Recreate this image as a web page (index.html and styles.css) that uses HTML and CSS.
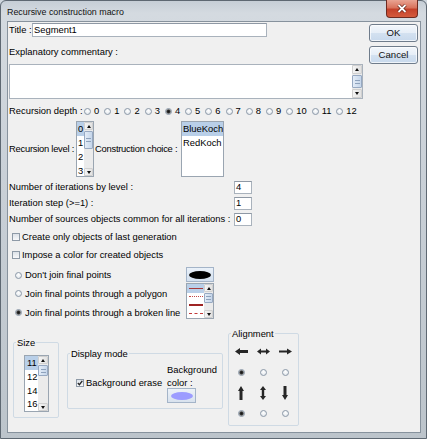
FILE: index.html
```html
<!DOCTYPE html>
<html lang="en">
<head>
<meta charset="utf-8">
<title>Recursive construction macro</title>
<link rel="stylesheet" href="styles.css">
</head>
<body>
<div class="window">
  <div class="titlebar">
    <span class="wtitle">Recursive construction macro</span>
    <div class="close"><svg width="12" height="9" viewBox="0 0 12 9"><path d="M2.5 1 L9.5 8 M9.5 1 L2.5 8" stroke="#5a1a10" stroke-width="3.2"/><path d="M2.5 1 L9.5 8 M9.5 1 L2.5 8" stroke="#fff" stroke-width="1.8"/></svg></div>
  </div>
  <div class="client">
    <div class="main">
      <div class="row title-row"><span class="lbl-title">Title :</span><div class="tinput title-input">Segment1</div></div>
      <div class="row expl">Explanatory commentary :</div>
      <div class="textarea">
        <div class="vscroll">
          <div class="sb-btn up b9"></div>
          <div class="sb-thumb t14"><span></span></div>
          <div class="sb-track"></div>
          <div class="sb-btn down b9"></div>
        </div>
      </div>
      <div class="row depth">
        <span class="depth-label">Recursion depth :</span>
        <span class="ropt"><i class="radio"></i>0</span>
        <span class="ropt"><i class="radio"></i>1</span>
        <span class="ropt"><i class="radio"></i>2</span>
        <span class="ropt"><i class="radio"></i>3</span>
        <span class="ropt"><i class="radio on"></i>4</span>
        <span class="ropt"><i class="radio"></i>5</span>
        <span class="ropt"><i class="radio"></i>6</span>
        <span class="ropt"><i class="radio"></i>7</span>
        <span class="ropt"><i class="radio"></i>8</span>
        <span class="ropt"><i class="radio"></i>9</span>
        <span class="ropt"><i class="radio"></i>10</span>
        <span class="ropt"><i class="radio"></i>11</span>
        <span class="ropt"><i class="radio"></i>12</span>
      </div>
      <div class="row levels">
        <span class="lv-label">Recursion level :</span>
        <div class="list lv-list">
          <div class="items">
            <div class="item r14 sel">0</div>
            <div class="item r14">1</div>
            <div class="item r14">2</div>
            <div class="item r14">3</div>
          </div>
          <div class="vscroll">
            <div class="sb-btn up b8"></div>
            <div class="sb-thumb t18"><span></span></div>
            <div class="sb-track"></div>
            <div class="sb-btn down b8"></div>
          </div>
        </div>
        <span class="cc-label">Construction choice :</span>
        <div class="list cc-list">
          <div class="items">
            <div class="item r14 sel">BlueKoch</div>
            <div class="item r14">RedKoch</div>
          </div>
        </div>
      </div>
      <div class="row field first"><span class="f-label">Number of iterations by level :</span><div class="tinput num">4</div></div>
      <div class="row field"><span class="f-label">Iteration step (&gt;=1) :</span><div class="tinput num">1</div></div>
      <div class="row field"><span class="f-label">Number of sources objects common for all iterations :</span><div class="tinput num">0</div></div>
      <div class="row crow first"><i class="check"></i>Create only objects of last generation</div>
      <div class="row crow"><i class="check"></i>Impose a color for created objects</div>
      <div class="join">
        <div class="join-opts">
          <div class="jrow j18"><i class="radio"></i>Don't join final points</div>
          <div class="jrow j19"><i class="radio"></i>Join final points through a polygon</div>
          <div class="jrow j19"><i class="radio on"></i>Join final points through a broken line</div>
        </div>
        <div class="join-boxes">
          <div class="pointbox"><span class="blob"></span></div>
          <div class="list linelist">
            <div class="items">
              <div class="lrow sel"><span class="ln solid"></span></div>
              <div class="lrow"><span class="ln dotted"></span></div>
              <div class="lrow"><span class="ln thick"></span></div>
              <div class="lrow"><span class="ln dashed"></span></div>
            </div>
            <div class="vscroll">
              <div class="sb-btn up b8"></div>
              <div class="sb-thumb t10"><span></span></div>
              <div class="sb-track"></div>
              <div class="sb-btn down b8"></div>
            </div>
          </div>
        </div>
      </div>
      <div class="bottom">
        <fieldset class="fs-size">
          <legend>Size</legend>
          <div class="list sizelist">
            <div class="items">
              <div class="item r13 sel">11</div>
              <div class="item r13">12</div>
              <div class="item r13">14</div>
              <div class="item r13">16</div>
            </div>
            <div class="vscroll">
              <div class="sb-btn up b8"></div>
              <div class="sb-thumb t11"><span></span></div>
              <div class="sb-track"></div>
              <div class="sb-btn down b8"></div>
            </div>
          </div>
        </fieldset>
        <fieldset class="fs-display">
          <legend>Display mode</legend>
          <div class="disp">
            <div class="erase"><i class="check on"><svg width="6" height="6" viewBox="0 0 6 6"><path d="M0.8 3 L2.4 4.7 L5.3 0.8" fill="none" stroke="#222" stroke-width="1.3"/></svg></i>Background erase</div>
            <div class="bgcol">
              <div class="bgline">Background</div>
              <div class="bgline">color :</div>
              <div class="colorbox"><span class="lav"></span></div>
            </div>
          </div>
        </fieldset>
        <fieldset class="fs-align">
          <legend>Alignment</legend>
          <div class="agrid">
            <span class="cell"><svg width="13" height="7" viewBox="0 0 13 7"><path d="M0 3.5 L5 0 V2 H13 V5 H5 V7 Z" fill="#262626"/></svg></span>
            <span class="cell"><svg width="13" height="7" viewBox="0 0 13 7"><path d="M0 3.5 L4 0.5 V2.5 H9 V0.5 L13 3.5 L9 6.5 V4.5 H4 V6.5 Z" fill="#262626"/></svg></span>
            <span class="cell"><svg width="13" height="7" viewBox="0 0 13 7"><path d="M0 2.6 H8 V0.5 L13 3.5 L8 6.5 V4.4 H0 Z" fill="#262626"/></svg></span>
            <span class="cell"><i class="radio on"></i></span>
            <span class="cell"><i class="radio"></i></span>
            <span class="cell"><i class="radio"></i></span>
            <span class="cell"><svg width="6" height="14" viewBox="0 0 6 14"><path d="M3 0 L6 5 H4.5 V14 H1.5 V5 H0 Z" fill="#262626"/></svg></span>
            <span class="cell"><svg width="6" height="14" viewBox="0 0 6 14"><path d="M3 0 L6 4 H4.2 V10 H6 L3 14 L0 10 H1.8 V4 H0 Z" fill="#262626"/></svg></span>
            <span class="cell"><svg width="6" height="14" viewBox="0 0 6 14"><path d="M1.5 0 H4.5 V9 H6 L3 14 L0 9 H1.5 Z" fill="#262626"/></svg></span>
            <span class="cell"><i class="radio on"></i></span>
            <span class="cell"><i class="radio"></i></span>
            <span class="cell"><i class="radio"></i></span>
          </div>
        </fieldset>
      </div>
    </div>
    <div class="buttons">
      <div class="btn">OK</div>
      <div class="btn">Cancel</div>
    </div>
  </div>
</div>
</body>
</html>
```
FILE: styles.css
```css
* { box-sizing: border-box; margin: 0; padding: 0; }
html, body { width: 427px; height: 439px; overflow: hidden; }
body {
  font-family: "Liberation Sans", Arial, sans-serif;
  font-size: 9.4px;
  line-height: 1;
  color: #000;
  background: #cfd6dd;
}
i { font-style: normal; }

.window {
  width: 427px;
  height: 439px;
  border: 1px solid #5e6872;
  border-radius: 6px 6px 0 0;
  background: linear-gradient(180deg, #c6ced6 0, #d4dae0 12px, #c9d0d7 40%, #bcc4cb 100%);
  padding: 0 5px 5px 6px;
  display: flex;
  flex-direction: column;
}
.titlebar {
  height: 20px;
  display: flex;
  align-items: flex-start;
}
.wtitle {
  font-size: 8.9px;
  margin-top: 7px;
  color: #111;
}
.close {
  margin-left: auto;
  margin-right: 3px;
  margin-top: -1px;
  width: 32px;
  height: 18px;
  border: 1px solid #6e2a20;
  border-top: none;
  border-radius: 0 0 4px 4px;
  background: linear-gradient(180deg, #e9a493 0, #d9735d 45%, #c4412a 55%, #d45a3c 100%);
  display: flex;
  align-items: center;
  justify-content: center;
}

.client {
  width: 414px;
  height: 412px;
  border: 1px solid #87929d;
  background: #f0f0f0;
  display: flex;
}
.main {
  width: 357px;
  padding-left: 1px;
  display: flex;
  flex-direction: column;
}
.buttons {
  margin-left: auto;
  margin-right: 2px;
  padding-top: 2px;
  width: 49px;
  display: flex;
  flex-direction: column;
  gap: 4px;
}
.btn {
  height: 18px;
  border: 1px solid #6f7c8b;
  border-radius: 3px;
  background: linear-gradient(180deg, #f3f7fb 0, #e6eef7 48%, #d3e1f0 52%, #c8d9ec 100%);
  box-shadow: inset 0 0 0 1px rgba(255,255,255,0.7);
  display: flex;
  align-items: center;
  justify-content: center;
  font-size: 9.6px;
  color: #111;
}

.row { display: flex; align-items: center; white-space: nowrap; }
.title-row { height: 16px; }
.lbl-title { width: 23px; }
.tinput {
  background: #fff;
  border: 1px solid #a9b2bc;
  border-top-color: #8e98a4;
  display: flex;
  align-items: center;
  padding-left: 1px;
}
.title-input { width: 235px; height: 14px; }
.expl { margin-top: 7px; height: 14px; }

.textarea {
  margin-top: 5px;
  width: 354px;
  height: 35px;
  background: #fff;
  border: 1px solid #a9b2bc;
  display: flex;
  justify-content: flex-end;
}

/* scrollbars */
.vscroll {
  width: 10px;
  display: flex;
  flex-direction: column;
  background: #ebebeb;
  flex: none;
}
.sb-btn {
  display: flex;
  align-items: center;
  justify-content: center;
  background: linear-gradient(90deg, #f4f4f4, #e2e2e2);
  border: 1px solid #d0d0d0;
  border-radius: 1px;
}
.b8 { height: 8px; }
.b9 { height: 9px; }
.sb-btn.up::after, .sb-btn.down::after {
  content: "";
  width: 0;
  height: 0;
  border-left: 2.5px solid transparent;
  border-right: 2.5px solid transparent;
}
.sb-btn.up::after { border-bottom: 3px solid #111; }
.sb-btn.down::after { border-top: 3px solid #111; }
.sb-thumb {
  margin: 1px 0;
  border: 1px solid #97a9c2;
  border-radius: 1px;
  background: linear-gradient(90deg, #e3ecf7, #c6d6ea);
  display: flex;
  align-items: center;
  justify-content: center;
}
.sb-thumb span {
  width: 5px;
  height: 4px;
  border-top: 1px solid #8ea2bc;
  border-bottom: 1px solid #8ea2bc;
}
.t10 { height: 10px; }
.t11 { height: 11px; }
.t14 { height: 14px; }
.t18 { height: 18px; }
.sb-track { flex: 1; }

/* recursion depth */
.depth { margin-top: 5px; height: 14px; }
.depth-label { width: 75px; }
.ropt { display: flex; align-items: center; gap: 3px; margin-right: 5px; }
.radio {
  display: block;
  width: 7px;
  height: 7px;
  border-radius: 50%;
  border: 1px solid #8b99a8;
  background: radial-gradient(circle at 50% 35%, #ffffff 0, #eef1f4 50%, #d9dee4 100%);
  flex: none;
}
.radio.on {
  background: radial-gradient(circle, #151515 0, #2a2a2a 1.3px, #8c8c8c 2.2px, #f0f0f0 2.8px);
}

/* lists */
.list {
  background: #fff;
  border: 1px solid #9aa5b1;
  display: flex;
  overflow: hidden;
}
.items { flex: 1; overflow: hidden; }
.item { padding-left: 1px; display: flex; align-items: center; white-space: nowrap; }
.r14 { height: 14px; }
.r13 { height: 13.75px; }
.sel { background: #b9cfe8; }

.levels { margin-top: 3px; height: 56px; }
.lv-label { width: 67px; letter-spacing: -0.25px; }
.lv-list { width: 18px; height: 56px; }
.lv-list .vscroll { width: 9px; }
.cc-label { margin-left: 1px; width: 86px; letter-spacing: -0.25px; }
.cc-list { width: 43px; height: 56px; }

/* numeric fields */
.field { height: 16px; }
.field.first { margin-top: 2px; }
.f-label { width: 225px; }
.num { width: 18px; height: 13px; }

/* checkboxes */
.crow { height: 18px; padding-left: 3px; }
.crow.first { margin-top: 1px; }
.check {
  display: flex;
  align-items: center;
  justify-content: center;
  width: 8px;
  height: 8px;
  border: 1px solid #8e9aa7;
  background: linear-gradient(180deg, #dde2e8, #f7f8fa);
  margin-right: 2px;
  flex: none;
}

/* join options */
.join { margin-top: 2px; height: 56px; display: flex; }
.join-opts { width: 177px; display: flex; flex-direction: column; }
.jrow { display: flex; align-items: center; gap: 3px; padding-left: 6px; white-space: nowrap; }
.j18 { height: 18px; }
.j19 { height: 19px; }
.join-boxes { padding-top: 1px; display: flex; flex-direction: column; gap: 1px; }
.pointbox {
  width: 28px;
  height: 15px;
  border: 1px solid #a4b4c8;
  background: linear-gradient(180deg, #eaf1f9, #d3e0ef);
  display: flex;
  align-items: center;
  justify-content: center;
}
.blob { width: 22px; height: 8px; border-radius: 50%; background: #000; }
.linelist { width: 28px; height: 36px; }
.linelist .vscroll { width: 9px; }
.lrow { height: 8.5px; display: flex; align-items: center; padding-left: 2px; }
.ln { width: 14px; height: 0; }
.ln.solid { border-top: 1px solid #a83a3a; }
.ln.dotted { border-top: 1px dotted #c24a4a; }
.ln.thick { border-top: 2px solid #9e2424; }
.ln.dashed { border-top: 1px dashed #c23a3a; }

/* bottom panels */
.bottom { display: flex; align-items: flex-start; }
fieldset {
  border: 1px solid #cfdae4;
  border-radius: 2px;
}
legend {
  margin-left: 2px;
  padding: 0 1px;
  line-height: 11px;
  height: 11px;
}
.fs-size { margin-left: 4px; margin-top: 14.5px; width: 46px; height: 81px; }
.sizelist { margin-top: 7.5px; margin-left: 10px; width: 25px; height: 57px; }
.sizelist .item { padding-left: 2px; }

.fs-display { margin-left: 8px; margin-top: 25.5px; width: 156px; height: 61px; }
.disp { display: flex; align-items: flex-start; padding-left: 8px; }
.erase { width: 91px; height: 13px; margin-top: 18px; display: flex; align-items: center; white-space: nowrap; }
.bgcol { margin-top: 4.5px; display: flex; flex-direction: column; }
.bgline { height: 13px; display: flex; align-items: center; }
.colorbox {
  margin-top: -1px;
  width: 29px;
  height: 15px;
  border: 1px solid #a4b4c8;
  background: linear-gradient(180deg, #edf2f8, #d8e2ee);
  display: flex;
  align-items: center;
  justify-content: center;
}
.lav { width: 22px; height: 8px; border-radius: 50%; background: #9c9cff; }

.fs-align { margin-left: 5px; margin-top: 5.5px; width: 71px; height: 98px; }
.agrid {
  padding-top: 3px;
  padding-left: 1px;
  display: grid;
  grid-template-columns: repeat(3, 22px);
  grid-auto-rows: 20.7px;
}
.cell { display: flex; align-items: center; justify-content: center; }
```
